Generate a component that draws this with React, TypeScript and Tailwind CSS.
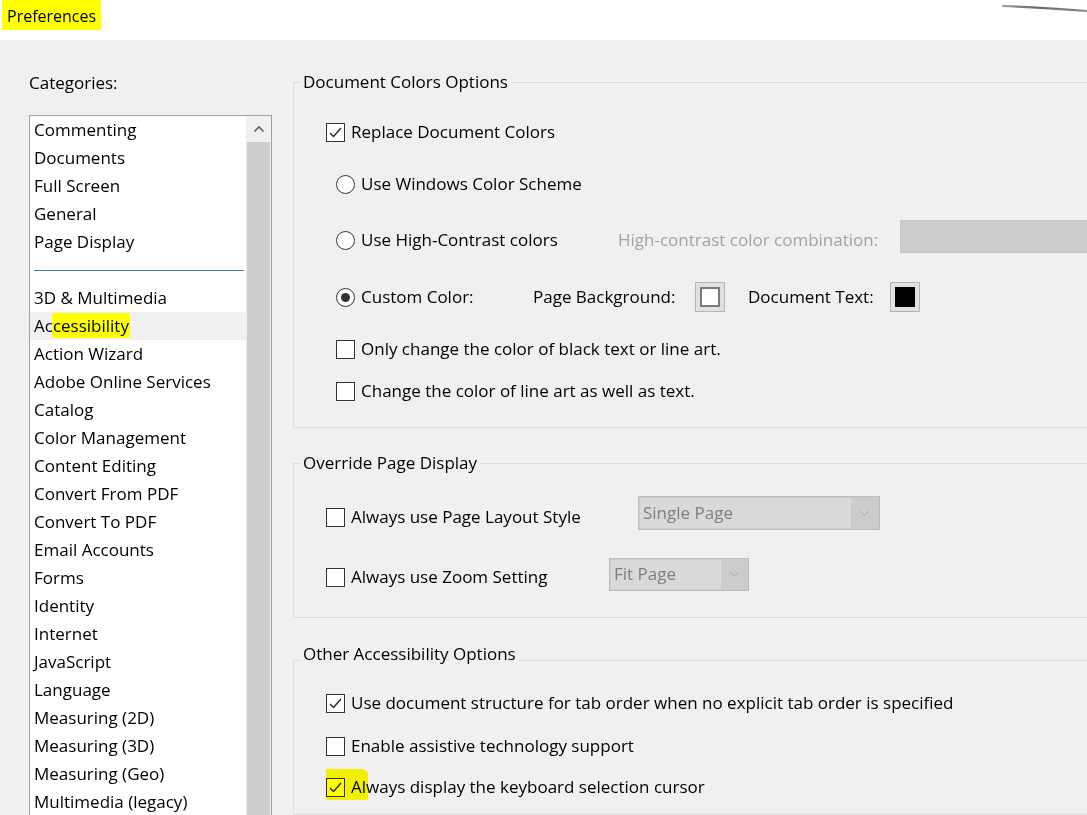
import React from 'react';

const font = { fontFamily: '"Open Sans", "Noto Sans", sans-serif' };

const topItems = ['Commenting', 'Documents', 'Full Screen', 'General', 'Page Display'];
const otherItems = [
  '3D & Multimedia',
  'Accessibility',
  'Action Wizard',
  'Adobe Online Services',
  'Catalog',
  'Color Management',
  'Content Editing',
  'Convert From PDF',
  'Convert To PDF',
  'Email Accounts',
  'Forms',
  'Identity',
  'Internet',
  'JavaScript',
  'Language',
  'Measuring (2D)',
  'Measuring (3D)',
  'Measuring (Geo)',
  'Multimedia (legacy)',
];

const Check = ({ checked }: { checked?: boolean }) => (
  <span className="flex shrink-0 items-center justify-center w-[19px] h-[19px] border border-[#333333] bg-white">
    {checked && (
      <svg width="15" height="15" viewBox="0 0 15 15">
        <path d="M2 8 L5.5 11.5 L13 3" fill="none" stroke="#222222" strokeWidth="1.3" />
      </svg>
    )}
  </span>
);

const Radio = ({ checked }: { checked?: boolean }) => (
  <span className="flex shrink-0 items-center justify-center w-[19px] h-[19px] rounded-full border border-[#333333] bg-white">
    {checked && <span className="w-[9px] h-[9px] rounded-full bg-[#333333]" />}
  </span>
);

const Swatch = ({ dark }: { dark?: boolean }) => (
  <span className="flex shrink-0 items-center justify-center w-[30px] h-[30px] border border-[#b4b4b4] bg-[#e1e1e1]">
    <span className={dark ? 'w-[20px] h-[20px] bg-black' : 'w-[20px] h-[20px] bg-white border-2 border-[#7a7a7a]'} />
  </span>
);

const Select = ({ label, width, inner, extra }: { label: string; width: string; inner: string; extra: string }) => (
  <span className={`flex shrink-0 items-stretch border border-[#bdbdbd] bg-[#cccccc] p-[1px] ${width} ${extra}`}>
    <span className={`flex items-center bg-[#d9d9d9] pl-[3px] text-[#7f7f7f] ${inner}`}>{label}</span>
    <span className="flex flex-1 items-center justify-center">
      <svg width="11" height="7" viewBox="0 0 11 7">
        <path d="M1 1 L5.5 5.5 L10 1" fill="none" stroke="#a8a8a8" strokeWidth="1" />
      </svg>
    </span>
  </span>
);

const ListItem = ({ name, selected }: { name: string; selected?: boolean }) => (
  <div className={`relative h-[28px] leading-[28px] pl-[4px] whitespace-nowrap ${selected ? 'bg-[#f0f0f0]' : ''}`}>
    {selected && (
      <span className="absolute left-[22px] top-[1px] w-[78px] h-[25px] bg-[#ffff00] rounded-[2px]" />
    )}
    <span className="relative">{name}</span>
  </div>
);

export default function App() {
  return (
    <div className="w-[1087px] h-[815px] overflow-hidden bg-[#f0f0f0] text-black text-[17px] flex flex-col" style={font}>
      <header className="relative h-[40px] shrink-0 bg-white">
        <span className="ml-[2px] inline-block h-[30px] leading-[32px] bg-[#ffff00] px-[5px] text-[16px]">
          Preferences
        </span>
        <svg className="absolute right-0 top-[3px]" width="86" height="12" viewBox="0 0 86 12">
          <defs>
            <linearGradient id="scr" x1="0" x2="1" y1="0" y2="0">
              <stop offset="0" stopColor="#9a9a9a" />
              <stop offset="0.4" stopColor="#6a6a6a" />
              <stop offset="1" stopColor="#8c8c8c" />
            </linearGradient>
          </defs>
          <path d="M2 3 C 30 4, 60 6, 86 8" fill="none" stroke="url(#scr)" strokeWidth="2.2" strokeLinecap="round" />
        </svg>
      </header>

      <div className="flex flex-1 min-h-0">
        <aside className="ml-[29px] w-[243px] shrink-0 flex flex-col">
          <div className="mt-[31px] h-[24px] leading-[24px]">Categories:</div>
          <div className="mt-[20px] h-[760px] flex border border-[#a0a0a0] bg-white">
            <div className="flex-1 min-w-0">
              {topItems.map((n) => (
                <ListItem key={n} name={n} />
              ))}
              <div className="h-[28px] flex items-center pl-[4px] pr-[2px]">
                <span className="h-[1px] w-full bg-[#3b7fb6]" />
              </div>
              {otherItems.map((n) => (
                <ListItem key={n} name={n} selected={n === 'Accessibility'} />
              ))}
            </div>
            <div className="w-[25px] shrink-0 flex flex-col bg-[#f0f0f0]">
              <div className="h-[26px] flex items-center justify-center">
                <svg width="12" height="8" viewBox="0 0 12 8">
                  <path d="M1.5 6.5 L6 2 L10.5 6.5" fill="none" stroke="#606060" strokeWidth="1.6" />
                </svg>
              </div>
              <div className="flex-1 mx-[1px] bg-[#cdcdcd]" />
            </div>
          </div>
        </aside>

        <main className="ml-[21px] flex-1 min-w-0 flex flex-col">
          <fieldset className="mt-[30px] w-[820px] border border-[#dcdcdc] pb-[22px]">
            <legend className="ml-[6px] px-[3px] h-[24px] leading-[24px]">Document Colors Options</legend>
            <div className="mt-[24px] h-[28px] flex items-center gap-[6px] pl-[32px]">
              <Check checked />
              <span>Replace Document Colors</span>
            </div>
            <div className="mt-[24px] h-[28px] flex items-center gap-[6px] pl-[42px]">
              <Radio />
              <span>Use Windows Color Scheme</span>
            </div>
            <div className="mt-[28px] h-[28px] flex items-center pl-[42px]">
              <Radio />
              <span className="ml-[6px] w-[257px]">Use High-Contrast colors</span>
              <span className="w-[282px] text-[#a3a3a3]">High-contrast color combination:</span>
              <span className="mb-[7px] h-[33px] w-[200px] border border-[#c4c4c4] bg-[#cccccc]" />
            </div>
            <div className="mt-[28px] h-[30px] flex items-center pl-[42px]">
              <Radio checked />
              <span className="ml-[6px] w-[172px]">Custom Color:</span>
              <span className="w-[162px]">Page Background:</span>
              <Swatch />
              <span className="ml-[23px] w-[142px]">Document Text:</span>
              <Swatch dark />
            </div>
            <div className="mt-[23px] h-[28px] flex items-center gap-[6px] pl-[42px]">
              <Check />
              <span>Only change the color of black text or line art.</span>
            </div>
            <div className="mt-[14px] h-[28px] flex items-center gap-[6px] pl-[42px]">
              <Check />
              <span>Change the color of line art as well as text.</span>
            </div>
          </fieldset>

          <fieldset className="mt-[23px] w-[820px] border border-[#dcdcdc] pb-[26px]">
            <legend className="ml-[6px] px-[3px] h-[24px] leading-[24px]">Override Page Display</legend>
            <div className="mt-[28px] h-[28px] flex items-center pl-[32px]">
              <Check />
              <span className="ml-[6px] w-[287px]">Always use Page Layout Style</span>
              <Select label="Single Page" width="w-[242px]" inner="w-[211px]" extra="h-[34px] mb-[8px]" />
            </div>
            <div className="mt-[32px] h-[28px] flex items-center pl-[32px]">
              <Check />
              <span className="ml-[6px] w-[258px]">Always use Zoom Setting</span>
              <Select label="Fit Page" width="w-[140px]" inner="w-[110px]" extra="h-[33px] mb-[6px]" />
            </div>
          </fieldset>

          <fieldset className="mt-[24px] w-[820px] h-[300px] border border-[#dcdcdc]">
            <legend className="ml-[6px] px-[3px] h-[36px] leading-[24px] pb-[12px]">Other Accessibility Options</legend>
            <div className="mt-[11px] h-[28px] flex items-center gap-[6px] pl-[32px]">
              <Check checked />
              <span>Use document structure for tab order when no explicit tab order is specified</span>
            </div>
            <div className="mt-[15px] h-[28px] flex items-center gap-[6px] pl-[32px]">
              <Check />
              <span>Enable assistive technology support</span>
            </div>
            <div className="relative mt-[13px] h-[28px] flex items-center gap-[6px] pl-[32px]">
              <Check checked />
              <span>Always display the keyboard selection cursor</span>
              <span className="absolute left-[32px] top-[-4px] w-[42px] h-[31px] bg-[#ffff00] mix-blend-multiply rounded-tr-[6px]" />
            </div>
          </fieldset>
        </main>
      </div>
    </div>
  );
}
